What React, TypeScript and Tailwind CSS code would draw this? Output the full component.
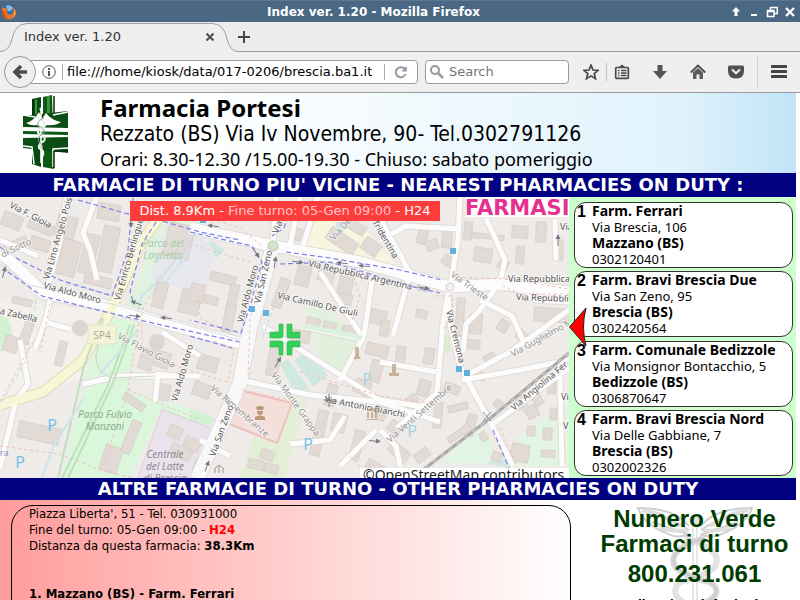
import { useState } from 'react';

const pharmacies = [
  { name: 'Farm. Ferrari', address: 'Via Brescia, 106', city: 'Mazzano (BS)', phone: '0302120401' },
  { name: 'Farm. Bravi Brescia Due', address: 'Via San Zeno, 95', city: 'Brescia (BS)', phone: '0302420564' },
  { name: 'Farm. Comunale Bedizzole', address: 'Via Monsignor Bontacchio, 5', city: 'Bedizzole (BS)', phone: '0306870647' },
  { name: 'Farm. Bravi Brescia Nord', address: 'Via Delle Gabbiane, 7', city: 'Brescia (BS)', phone: '0302002326' },
];

// x, y, width, height, angle
const buildings = [
  [2, 214, 20, 14, 22], [28, 222, 26, 10, 22], [56, 216, 20, 22, 14], [4, 240, 24, 10, -24], [30, 238, 20, 12, 18],
  [60, 240, 18, 36, 14], [82, 234, 14, 40, 14], [98, 204, 22, 16, 10], [100, 226, 16, 46, 12], [84, 276, 28, 10, 14],
  [12, 298, 20, 7, 14], [57, 341, 8, 25, 14], [4, 336, 14, 16, 16], [22, 322, 9, 22, 20], [18, 425, 42, 16, 12],
  [166, 224, 26, 34, 14], [154, 282, 12, 26, 14], [180, 290, 20, 24, 14], [202, 296, 16, 8, 14], [210, 274, 26, 9, 14],
  [228, 284, 9, 30, 12], [190, 284, 14, 18, 14], [224, 304, 10, 28, 12], [140, 348, 14, 22, 18], [156, 352, 14, 16, 18],
  [198, 356, 20, 15, 15], [193, 383, 18, 14, 20], [156, 384, 14, 16, 10], [122, 398, 24, 8, 34], [102, 446, 18, 26, 18],
  [126, 420, 10, 34, 22], [168, 426, 14, 12, 25], [184, 438, 16, 12, 25], [170, 446, 22, 12, 25], [194, 460, 12, 12, 25],
  [292, 228, 10, 12, 24], [326, 234, 32, 14, 34], [362, 240, 18, 14, 36], [346, 222, 20, 10, 30],
  [276, 278, 10, 30, 20], [296, 266, 14, 20, 14], [318, 270, 16, 12, 20], [338, 276, 14, 24, 12], [338, 294, 14, 10, 14],
  [306, 318, 14, 10, 12], [323, 322, 13, 10, 12], [342, 326, 14, 10, 12], [366, 344, 22, 12, 14], [370, 310, 16, 14, 14],
  [268, 344, 12, 32, 10], [288, 330, 22, 12, 10], [370, 360, 12, 22, 14], [354, 380, 16, 14, 24], [326, 384, 10, 22, 14],
  [314, 410, 10, 46, 12], [332, 414, 14, 18, 12], [352, 430, 10, 30, 14], [374, 406, 12, 14, 20], [388, 422, 14, 12, 40],
  [388, 446, 22, 12, 40], [366, 462, 18, 10, 30], [260, 450, 14, 10, 20], [248, 460, 16, 9, 14], [264, 464, 14, 9, 14],
  [418, 224, 10, 20, 14], [442, 228, 10, 20, 4], [464, 222, 8, 18, 4], [472, 234, 32, 5, 6], [474, 248, 18, 14, 8],
  [512, 226, 16, 12, 4], [516, 246, 8, 18, 4], [536, 222, 10, 20, 2], [554, 240, 9, 20, 2], [498, 260, 10, 10, 30],
  [426, 240, 12, 10, -20], [442, 256, 12, 10, 35], [456, 298, 8, 38, 4], [470, 314, 12, 20, 4], [464, 340, 16, 9, 4],
  [416, 310, 11, 8, 14], [380, 320, 9, 16, 8], [396, 346, 9, 20, 8], [424, 348, 10, 16, 10], [418, 282, 10, 9, 10],
  [534, 308, 36, 14, 4], [498, 320, 10, 12, 30], [516, 332, 14, 10, 40], [476, 372, 10, 8, 30], [444, 384, 16, 9, 22],
  [434, 402, 8, 26, 6], [448, 404, 20, 7, -14], [466, 414, 9, 22, 14], [446, 430, 26, 7, -36], [480, 432, 7, 9, -30],
  [515, 395, 10, 14, -30], [532, 390, 9, 16, -30], [526, 406, 12, 12, -30], [548, 378, 8, 16, 4], [550, 408, 7, 12, 4],
  [527, 426, 8, 10, 4], [543, 428, 9, 12, 4], [511, 444, 18, 18, 10], [541, 450, 14, 7, 4], [492, 452, 9, 9, 20],
  [494, 400, 8, 8, 30], [418, 380, 12, 16, 14], [404, 396, 14, 9, -38], [414, 450, 16, 10, -38], [484, 354, 12, 9, -28],
];

const mainRoads = 'M0 253 L13 263 L43 293 L100 304 L200 333 L240 343 M190 228 L273 246 L360 262 L450 287 L500 284 L569 292';
const sanZeno = 'M273 246 L250 329 L240 383 L197 479';
const berlinguer = 'M160 216 L143 240 L110 312 L83 360 L43 392 L0 405';

const roads = [
  'M97 196 L83 233 L90 250 L97 280', 'M67 196 L60 240 L47 290', 'M50 300 L46 318 L35 349',
  'M0 240 L38 256', 'M44 322 L70 329', 'M83 384 L120 376 L200 376', 'M0 468 L16 400 L28 384 L20 340',
  'M276 196 L273 246', 'M300 196 L290 246', 'M318 196 L302 250', 'M380 218 L410 273 L393 336',
  'M460 197 L458 240 L450 288', 'M380 240 L406 226 L460 229', 'M486 218 L505 260 L498 290',
  'M448 293 L443 323 L437 393 L397 428', 'M448 293 L449 320 L460 366 L487 416 L513 466',
  'M380 362 L436 372', 'M320 272 L363 338 L340 380', 'M305 327 L362 339', 'M372 280 L364 336',
  'M263 326 L380 400 L430 408', 'M240 380 L310 395 L380 402 L440 422', 'M465 376 L510 352 L569 310',
  'M462 380 L520 370 L569 360', 'M493 424 L520 404 L569 368', 'M555 220 L556 260', 'M560 376 L562 466',
  'M480 300 L512 316 L525 345', 'M463 352 L466 324 L480 310 L497 286', 'M510 284 L535 300 L569 302',
  'M155 402 L158 374 L175 376', 'M162 332 L200 356', 'M380 430 L396 446 L400 466', 'M200 440 L230 456',
  'M345 416 L330 440 L290 444', 'M340 466 L376 430',
];

const blueRoutes = [
  'M78 200 L132 215 L162 221 L200 232 L240 240', 'M133 198 L128 250 L112 296 L60 280 L16 258',
  'M0 247 L8 253', 'M8 272 L42 296 L110 313 L170 327 L240 342', 'M156 222 L142 244 L130 292 L134 304',
  'M190 232 L252 246 L262 262 L252 300 L241 333 L190 320', 'M286 252 L330 258 L400 270 L442 280',
  'M280 264 L330 262 L410 286 L440 293', 'M290 208 L284 228 L272 236', 'M493 430 L509 468', 'M190 336 L232 348',
];

const redPaths = [
  'M196 234 L160 280 L142 310 L142 360', 'M51 298 L44 335 L40 352', 'M0 402 L20 365 L34 340', 'M139 323 L128 390 L102 470',
  'M128 390 L200 420', 'M0 446 L60 454 L100 470 L140 480', 'M162 362 L228 382 L234 350 L212 340', 'M190 244 L250 262',
  'M198 294 L200 318 L225 330', 'M262 266 L250 320 L248 380', 'M242 390 L290 400', 'M350 266 L360 296 L352 320',
  'M451 277 L505 279 L569 289', 'M436 296 L452 296 L453 312 L443 330', 'M500 428 L516 464', 'M300 372 L380 396 L440 404',
  'M569 294 L520 294 L503 286', 'M160 204 L240 228 L262 246', 'M345 452 L369 474',
];

// text, x, y, angle, light
const streets: [string, number, number, number, boolean?][] = [
  ['Via F. Gioia', 9, 207, 28], ['a di Sotto', -4, 261, -26, true], ['Via Lino Angelo Pois', 49, 280, -74],
  ['Via Aldo Moro', 43, 288, 15], ['Via Zabella', -8, 312, 13], ['Via Enrico Berlinguer', 120, 301, -74],
  ['Via Flavio Gioia', 117, 338, 28, true], ['Via Aldo Moro', 177, 402, -74], ['Via Aldo Moro', 243, 323, -75],
  ['Via San Zeno', 260, 304, -77], ['Via', 278, 234, -70], ['Via De', 334, 241, -48, true], ['Tridentina', 372, 222, 60],
  ['Via Repubblica Argentina', 308, 266, 13], ['Via Camillo De Giuli', 277, 298, 13], ['Via Monte Grappa', 271, 375, 54, true],
  ['Via Rimembranze', 210, 389, 41, true], ['Via San Zeno', 215, 457, -70], ['Via Antonio Bianchi', 324, 402, 11],
  ['Via Venti Settembre', 390, 443, -41, true], ['Via Cremona', 446, 311, 76], ['Via Trieste', 450, 276, 35, true],
  ['Via Repubblica', 508, 282, 0], ['Via Repubbli', 516, 300, 2], ['Via Guglielmo M', 513, 357, -29, true],
  ['Via Angiolina Fer', 514, 411, -40], ['Via', 560, 230, 0], ['Vi', 561, 400, 0], ['V', 563, 429, 0],
];

const arrows = [
  [131, 222, 90], [4, 272, -75], [136, 303, 200], [135, 316, 8], [166, 318, 188], [213, 226, 188], [256, 253, 55],
  [275, 262, -80], [298, 262, 8], [342, 263, 188], [364, 266, 188], [424, 288, 10], [558, 240, -90], [227, 400, 80],
  [278, 362, -60], [207, 466, -70], [375, 441, 5],
];

function StreetMap() {
  return (
    <svg viewBox="0 197 569 281" preserveAspectRatio="xMinYMin slice" className="block h-[281px] w-full bg-[#eeebe8]" fontFamily="'Noto Sans', sans-serif" role="img" aria-label="Mappa">
      <rect x="0" y="197" width="569" height="281" fill="#eeebe8" />
      <path d="M0 300 L110 312 L84 376 L0 410Z" fill="#f4f0eb" />
      <path d="M156 222 L200 205 L205 240 L170 275 L140 310 L125 306 L145 260Z" fill="#e1f2e0" />
      <path d="M112 317 L138 323 L128 392 L200 412 L200 424 L160 412 L130 478 L62 478 L88 370Z" fill="#daf6db" />
      <path d="M0 315 L8 318 L16 345 L0 352Z M190 408 L214 418 L210 426 L190 422Z" fill="#d2f3d2" />
      <path d="M302 300 L320 305 L363 339 L340 380 L320 360Z" fill="#e2f1dd" />
      <path d="M287 399 L307 399 L284 478 L240 478 L257 430Z" fill="#e3efd5" />
      <path d="M480 423 L493 443 L488 463 L440 463Z M517 440 L569 395 L569 466 L517 466Z" fill="#e2f5e4" />
      <path d="M500 285 L569 287 L569 293 L504 292Z M442 336 L450 334 L450 352 L442 354Z" fill="#d6eed2" />
      <path d="M315 221 L352 214 L397 266 L385 272 L305 249Z" fill="#f8f6df" />
      <path d="M488 464 L494 454 L508 460 L508 468Z M202 247 L212 241 L224 250 L217 258Z M335 222 L346 222 L344 232 L336 230Z" fill="#cfe9e1" />
      <path d="M307 349 L328 376 L313 386 L294 361Z M280 364 L288 359 L309 388 L297 398Z" fill="#cfe9e0" />
      <path d="M166 224 L200 234 L214 250 L206 292 L150 280Z" fill="#e7e7ee" />
      <path d="M162 409 L216 430 L196 478 L138 478Z" fill="#ebe3ec" stroke="#ddd0dd" />
      <path d="M243 391 L292 403 L277 443 L229 424Z" fill="#f4dfdb" stroke="#efc0bb" strokeWidth="2" />

      <g fill="none" stroke="#e0dcd9" strokeLinejoin="round">
        <path d={mainRoads} strokeWidth="13" />
        <path d={roads.join(' ')} strokeWidth="7" />
        <path d={sanZeno} strokeWidth="16" />
      </g>
      <g>
        {buildings.map(([x, y, w, h, angle], i) => (
          <rect key={i} x={x} y={y} width={w} height={h} fill="#e2dad5" stroke="#d5ccc7" strokeWidth="0.7" transform={`rotate(${angle} ${x + w / 2} ${y + h / 2})`} />
        ))}
      </g>
      <path d={berlinguer} fill="none" stroke="#deddb6" strokeWidth="11" />
      <g fill="none" stroke="#fdfcfc" strokeLinejoin="round">
        <path d={mainRoads} strokeWidth="11" />
        <path d={roads.join(' ')} strokeWidth="5" />
        <path d={sanZeno} strokeWidth="14" stroke="#f9f8f9" />
      </g>
      <path d={berlinguer} fill="none" stroke="#f8f6d6" strokeWidth="9" />
      <path d="M305 326 L362 338" stroke="#dcf2de" strokeWidth="5" />
      <path d="M102 318 L84 366 L58 478 M134 325 L112 385 L68 478 M130 325 L108 385 L62 478" fill="none" stroke="#bfe0bd" strokeWidth="2" />
      <path d="M104 318 L96 356 Q96 374 112 378 L155 376" fill="none" stroke="#c8d8c4" />
      <path d="M0 265 L30 285 L120 306 L240 340" fill="none" stroke="#dcdcdc" />
      <circle cx="80" cy="328" r="8" fill="#ddd5d0" />
      <circle cx="157" cy="342" r="8" fill="#ddd5d0" />
      <circle cx="273" cy="246" r="5" fill="#d3e3c8" stroke="#b6c6aa" />
      <circle cx="450" cy="287" r="4" fill="#f4f2f1" stroke="#d0cccc" />
      <path d="M196 232 L166 272 L142 296 L138 310 M100 374 L138 330 M42 478 L54 445 L84 398 M166 282 L190 250" fill="none" stroke="#cfe5ec" strokeWidth="2" />
      <path d="M36 300 L26 360 L0 405 M66 284 L110 294 M276 300 L262 340" fill="none" stroke="#b3dfe8" strokeDasharray="4 3" />

      <path d="M569 353 L493 416 L423 470" fill="none" stroke="#a8a8a8" strokeWidth="3" />
      <path d="M569 353 L493 416 L423 470" fill="none" stroke="#dedede" strokeWidth="1" strokeDasharray="5 5" />
      <path d="M483 412 L491 421 M491 412 L483 421" stroke="#8a8a8a" />
      <path d={redPaths.join(' ')} fill="none" stroke="#f6bdb4" strokeDasharray="3 3" />
      <path d={blueRoutes.join(' ')} fill="none" stroke="#7c80ec" strokeDasharray="5 3" strokeWidth="1.2" />
      <g fill="none" stroke="#7a7a80">
        {arrows.map(([x, y, angle], i) => (
          <g key={i} transform={`translate(${x} ${y}) rotate(${angle})`}>
            <path d="M-6 0 H2" />
            <path d="M1 -2.5 L6 0 L1 2.5Z" fill="#77777f" stroke="none" />
          </g>
        ))}
      </g>

      <rect x="88" y="325" width="28" height="19" rx="2" fill="#f3f4d8" stroke="#e2e3c2" />
      <text x="102" y="339" fontSize="10" textAnchor="middle" fill="#aaaaa0">SP4</text>
      <g fontSize="9">
        {streets.map(([label, x, y, angle, light], i) => (
          <text key={i} transform={`translate(${x} ${y}) rotate(${angle})`} fill={light ? '#949090' : '#575555'} stroke="#ffffff" strokeWidth="2" strokeOpacity="0.6" paintOrder="stroke">
            {label}
          </text>
        ))}
      </g>
      <g fontSize="10" fontStyle="italic" textAnchor="middle" fill="#86b08a">
        <text x="163" y="247" fill="#a5ccaa">Parco del</text>
        <text x="163" y="259" fill="#a5ccaa">Laghetto</text>
        <text x="105" y="418">Parco Fulvio</text>
        <text x="105" y="430">Manzoni</text>
        <g fill="#8f8a98">
          <text x="165" y="458">Centrale</text>
          <text x="165" y="470">del Latte</text>
          <text x="165" y="482">di Brescia</text>
        </g>
      </g>
      <g fontSize="16" fill="#74bfe6" textAnchor="middle">
        <text x="52" y="431">P</text>
        <text x="20" y="468">P</text>
        <text x="308" y="450">P</text>
        <text x="367" y="385" fill="#a9d4ea">P</text>
        <text x="412" y="437" fill="#a9d4ea">P</text>
      </g>
      <text x="0" y="456" fontSize="9" fill="#8d8fc8">ra</text>

      <path d="M249 306h6v6h-6z M263 310h6v6h-6z M450 248h6v6h-6z M456 366h6v6h-6z M464 370h6v6h-6z M200 220h6v3h-6z" fill="#62b1dd" />
      <g fill="#b89a76">
        <path d="M256 407 Q260 405 264 407 L263 410 H257Z M257 411 H263 Q263 415 260 415 Q257 415 257 411Z M255 420 V417 Q260 414 265 417 V420Z" />
        <path d="M355 348 L357 346 L359 348 L359 356 L361 359 L353 359 L355 356Z M392 364h4v9h3v3h-10v-3h3z" opacity="0.7" />
        <path d="M366 411 L372 407 L378 411Z M367 412h2v6h-2z M371 412h2v6h-2z M375 412h2v6h-2z M366 419h12v1h-12z" opacity="0.7" />
      </g>
      <path d="M324 400h12 M329 394v13 M325 396l8 8" stroke="#777" fill="none" />
      <path d="M214 469l5-4 5 4 M215 469v4 M223 469v4 M219 466v7" stroke="#999" fill="none" />

      <g fill="#35d058" stroke="#2db84c" strokeWidth="0.6">
        <path d="M279 324h4v12q0 2-2 2h-11v-6h9z" />
        <path d="M287 324h5v8h8v6h-11q-2 0-2-2z" />
        <path d="M270 341h11q2 0 2 2v12h-4v-8h-9z" />
        <path d="M289 341h11v6h-8v8h-5v-12q0-2 2-2z" />
      </g>

      <rect x="466" y="197" width="103" height="20" fill="#fff" />
      <text x="465" y="215" fontSize="21" fontWeight="700" fill="#e6318f" fontFamily="'DejaVu Sans', sans-serif">FARMASI</text>
      <rect x="360" y="468" width="209" height="10" fill="#fff" />
      <text x="363" y="480" fontSize="14" fill="#222">©OpenStreetMap contributors</text>
    </svg>
  );
}

function PharmacyCross() {
  return (
    <svg viewBox="0 0 46 74" className="h-[74px] w-[46px] shrink-0" aria-hidden="true">
      <path d="M9 4 L18 2 L18 72 L9 69Z" fill="#0a4a12" />
      <path d="M20 2 L29 0 L31 74 L20 72Z" fill="#0d5a16" />
      <path d="M24 1 L27 1 L27 20 L24 20Z M12 5 L14 4 L14 22 L12 22Z" fill="#3c9442" />
      <path d="M0 21 L45 16 L45 58 L0 53Z" fill="#0b4f14" />
      <path d="M0 32 L45 33 L45 42 L0 43Z" fill="#fff" />
      <path d="M0 36 L45 37 L45 40 L0 39Z" fill="#0d5a16" />
      <path d="M0 20 L12 22 M30 20 L45 17 M0 51 L9 52 L11 69 M45 53 L30 54 L30 72" fill="none" stroke="#fff" strokeWidth="1.5" />
      <path d="M31 56 H45 M10 4 V20 M31 1 V18 M31 56 V73" stroke="#062c0a" strokeWidth="1.5" />
      <path d="M3 28 Q11 26 16 17 L19 24 L23 18 Q28 25 38 27 Q32 31 24 30 L19 34 L14 30 Q8 31 3 28Z" fill="#fff" />
      <path d="M18 13 V68" stroke="#fff" strokeWidth="1.6" />
      <path d="M15 23 Q24 27 21 32 Q14 34 15 38 Q24 42 21 46 Q15 49 16 53 Q22 56 20 61" fill="none" stroke="#e8f2e8" strokeWidth="2" />
      <path d="M21 23 Q12 27 16 31 Q23 34 21 38 Q13 42 16 47 Q21 50 19 54" fill="none" stroke="#8aa78c" strokeWidth="1" />
      <circle cx="18" cy="14" r="1.6" fill="#fff" />
    </svg>
  );
}

function Caduceus() {
  return (
    <svg viewBox="0 0 130 110" className="absolute top-[6px] left-1/2 h-[110px] w-[130px] -translate-x-1/2" fill="none" stroke="#cfcfcf" aria-hidden="true">
      <path d="M59 20 Q45 2 8 2 Q14 18 34 26 Q48 34 60 28 M59 24 Q42 12 16 7 M57 28 Q40 22 22 16 M71 20 Q85 2 122 2 Q116 18 96 26 Q82 34 70 28 M71 24 Q88 12 114 7 M73 28 Q90 22 108 16" strokeWidth="2" />
      <path d="M12 4 Q34 8 50 20 M118 4 Q96 8 80 20 M30 22 Q46 26 58 24 M100 22 Q84 26 72 24" stroke="#dedede" strokeWidth="4" />
      <path d="M63 18 V110 M67 18 V110" />
      <circle cx="65" cy="14" r="5" fill="#e6e6e6" />
      <path d="M55 32 Q96 44 84 62 Q70 72 50 76 Q38 88 56 98" strokeWidth="6" stroke="#e2e2e2" />
      <path d="M75 32 Q34 44 46 62 Q60 72 80 76 Q96 88 72 98" strokeWidth="6" stroke="#d8d8d8" />
      <path d="M75 32 Q34 44 46 62 Q60 72 80 76 Q96 88 72 98" stroke="#bdbdbd" />
    </svg>
  );
}

function TitleBar() {
  return (
    <div className="flex h-[22px] shrink-0 items-center border-t border-[#5c7690] bg-[#4a6784] pr-1 pl-px text-white">
      <svg viewBox="0 0 16 16" className="h-4 w-4 shrink-0" aria-hidden="true">
        <circle cx="8" cy="8" r="7" fill="#2f6fb5" />
        <path d="M5 2 Q9 0 12 4 Q10 8 7 7Z" fill="#7cc4ea" />
        <path d="M1 3 Q2 4 4 4 Q6 4 7 6 Q5 7 6 9 Q9 12 12 9 Q13 6 11 3 Q16 6 15 10 Q13 15 8 15.500 Q2 15 1 9Z" fill="#e8702a" />
        <path d="M13 5 Q16 10 12 13.500 Q14 10 13 5Z" fill="#fbc83a" />
        <path d="M1 7 Q1 13 7 15 Q3 12 3 8Z" fill="#c8421c" />
      </svg>
      <h1 className="flex-1 text-center text-[12px] font-bold">Index ver. 1.20 - Mozilla Firefox</h1>
      <div className="flex gap-[6px]">
        <button aria-label="Shade" className="h-3 w-3">
          <svg viewBox="0 0 12 12"><path d="M6 1 L10 5.500 H7.500 V10 H4.500 V5.500 H2Z" fill="#fff" /></svg>
        </button>
        <button aria-label="Minimize" className="h-3 w-3">
          <svg viewBox="0 0 12 12"><path d="M3 8 H9 V10 H3Z" fill="#fff" /></svg>
        </button>
        <button aria-label="Restore" className="h-3 w-3">
          <svg viewBox="0 0 12 12" fill="none" stroke="#fff" strokeWidth="1.500"><path d="M1.500 4.500 H8 V10.500 H1.500Z M1 5.500 H8 M4.500 4 V1.500 H11.300 V7.500 H8.500" /></svg>
        </button>
        <button aria-label="Close" className="h-3 w-3">
          <svg viewBox="0 0 12 12"><path d="M2 2 L10 10 M10 2 L2 10" stroke="#fff" strokeWidth="2.300" /></svg>
        </button>
      </div>
    </div>
  );
}

function TabStrip() {
  return (
    <div className="flex h-[30px] shrink-0 bg-[#ececec]">
      <div className="relative flex w-[238px] items-center justify-between pr-[22px] pl-6">
        <svg viewBox="0 0 238 30" className="absolute inset-0 h-[30px] w-[238px]" aria-hidden="true">
          <path d="M0 29.500 Q9 29.500 12 17 Q15 1.500 27 1.500 H212 Q224 1.500 227 17 Q230 29.500 238 29.500" fill="#efefef" stroke="#9aa0a6" />
        </svg>
        <span className="relative text-[13px] text-[#333]">Index ver. 1.20</span>
        <button aria-label="Close tab" className="relative h-3 w-3">
          <svg viewBox="0 0 12 12"><path d="M2.500 2.500 L9.500 9.500 M9.500 2.500 L2.500 9.500" stroke="#4c5454" strokeWidth="2.200" /></svg>
        </button>
      </div>
      <div className="flex flex-1 items-center border-b border-[#9a9a9a]">
        <button aria-label="New tab" className="h-3 w-3">
          <svg viewBox="0 0 12 12"><path d="M6 0 V12 M0 6 H12" stroke="#444" strokeWidth="2" /></svg>
        </button>
      </div>
    </div>
  );
}

function Toolbar() {
  const [url, setUrl] = useState('file:///home/kiosk/data/017-0206/brescia.ba1.it');
  const [query, setQuery] = useState('');

  return (
    <div className="flex h-[41px] shrink-0 items-center border-b border-[#9a9a9a] bg-[#efefef] pr-[13px] pl-1">
      <button aria-label="Back" className="z-10 flex h-8 w-8 shrink-0 items-center justify-center rounded-full border border-[#9a9a9a] bg-[#efefef]">
        <svg viewBox="0 0 16 16" className="h-4 w-4"><path d="M9 2 L3 8 L9 14 M3 8 H15" fill="none" stroke="#4a4a4a" strokeWidth="3.500" /></svg>
      </button>
      <div className="-ml-2 flex h-6 flex-1 items-center rounded-sm border border-[#9a9a9a] bg-white pl-[13px]">
        <svg viewBox="0 0 14 14" className="h-[14px] w-[14px] shrink-0" aria-hidden="true">
          <circle cx="7" cy="7" r="6.300" fill="none" stroke="#555" />
          <path d="M6 3h2v2H6z M6 6h2v5H6z" fill="#555" />
        </svg>
        <input aria-label="Address" value={url} onChange={(e) => setUrl(e.target.value)} className="ml-[6px] h-4 min-w-0 flex-1 border-l border-[#aaa] pl-1 text-[13px] text-black outline-none" />
        <span className="ml-3 h-4 w-px bg-[#aaa]" />
        <button aria-label="Reload" className="flex w-8 justify-center">
          <svg viewBox="0 0 14 14" className="h-[14px] w-[14px]"><path d="M11.500 9 A5 5 0 1 1 11 4.500" fill="none" stroke="#8e9aa6" strokeWidth="2" /><path d="M12.800 1 V6.500 H7.500Z" fill="#8e9aa6" /></svg>
        </button>
      </div>
      <label className="ml-[7px] flex h-6 w-[144px] items-center gap-[5px] rounded-sm border border-[#9a9a9a] bg-white pl-1">
        <svg viewBox="0 0 14 14" className="h-[14px] w-[14px] shrink-0" aria-hidden="true"><circle cx="5" cy="5" r="4" fill="none" stroke="#999" strokeWidth="2" /><path d="M8 8 L13 13" stroke="#999" strokeWidth="2.500" /></svg>
        <input aria-label="Search" placeholder="Search" value={query} onChange={(e) => setQuery(e.target.value)} className="w-full min-w-0 text-[13px] outline-none placeholder:text-[#757575]" />
      </label>
      <button aria-label="Bookmark" className="ml-[14px] h-4 w-4">
        <svg viewBox="0 0 16 16"><path d="M8 1.200 L10 6 L15.200 6.300 L11.200 9.600 L12.500 14.700 L8 11.900 L3.500 14.700 L4.800 9.600 L0.800 6.300 L6 6Z" fill="none" stroke="#4a4a4a" strokeWidth="1.700" /></svg>
      </button>
      <span className="mx-[7px] h-[18px] w-px bg-[#c4c4c4]" />
      <button aria-label="Bookmarks list" className="h-4 w-4">
        <svg viewBox="0 0 16 16"><path d="M2.500 3.500 H13.500 Q14.300 3.500 14.300 4.300 V13.500 Q14.300 14.300 13.500 14.300 H2.500 Q1.700 14.300 1.700 13.500 V4.300 Q1.700 3.500 2.500 3.500Z" fill="none" stroke="#4a4a4a" strokeWidth="1.700" /><path d="M5 3 L8 0.500 L11 3Z" fill="#4a4a4a" /><path d="M4 6.500 H5.500 M7 6.500 H12.500 M4 9 H5.500 M7 9 H12.500 M4 11.500 H5.500 M7 11.500 H12.500" stroke="#4a4a4a" strokeWidth="1.400" /></svg>
      </button>
      <button aria-label="Downloads" className="ml-[22px] h-4 w-4">
        <svg viewBox="0 0 16 16"><path d="M5.500 1 H10.500 V7 H15 L8 15 L1 7 H5.500Z" fill="#555" /></svg>
      </button>
      <button aria-label="Home" className="ml-[22px] h-4 w-4">
        <svg viewBox="0 0 16 16"><path d="M0.800 8.500 L8 1.500 L15.200 8.500" fill="none" stroke="#4a4a4a" strokeWidth="1.800" /><path d="M3 8.500 L8 4 L13 8.500 V15 H9.500 V10.500 H6.500 V15 H3Z" fill="#5c5c5c" /></svg>
      </button>
      <button aria-label="Pocket" className="ml-[22px] h-4 w-4">
        <svg viewBox="0 0 16 16"><path d="M1.500 1.500 H14.500 Q16 1.500 16 3 V7 Q16 14.500 8 14.500 Q0 14.500 0 7 V3 Q0 1.500 1.500 1.500Z" fill="#4f4f4f" /><path d="M4 5.500 L8 9.300 L12 5.500" fill="none" stroke="#efefef" strokeWidth="2" /></svg>
      </button>
      <span className="mx-[13px] h-[34px] w-px bg-[#d2d2d2]" />
      <button aria-label="Menu" className="h-4 w-4">
        <svg viewBox="0 0 16 16"><path d="M1 2.500 H15 M1 7.500 H15 M1 12.500 H15" stroke="#444" strokeWidth="3" strokeLinecap="round" /></svg>
      </button>
    </div>
  );
}

export default function App() {
  return (
    <div className="flex h-screen flex-col overflow-hidden bg-white font-['DejaVu_Sans',sans-serif]">
      <TitleBar />
      <TabStrip />
      <Toolbar />
      <main className="mr-1 font-['Noto_Sans',sans-serif] text-black">
        <header className="flex h-20 items-start gap-[31px] bg-linear-to-r from-white from-25% via-[#e0f3fc] via-85% to-[#c0e4f7] pt-[2px] pl-[23px]">
          <PharmacyCross />
          <div className="whitespace-nowrap">
            <h2 className="text-[24px] leading-[26px] font-bold">Farmacia Portesi</h2>
            <p className="font-['DejaVu_Sans_Condensed',sans-serif] text-[21px] leading-[26px]">Rezzato (BS) Via Iv Novembre, 90- Tel.0302791126</p>
            <p className="text-[18px] leading-[24px]">Orari: 8.30-12.30 /15.00-19.30 - Chiuso: sabato pomeriggio</p>
          </div>
        </header>
        <h2 className="bg-[#000080] text-center font-['DejaVu_Sans',sans-serif] text-[18px] leading-[24px] font-bold whitespace-nowrap text-white">
          FARMACIE DI TURNO PIU' VICINE - NEAREST PHARMACIES ON DUTY :
        </h2>
        <section className="flex">
          <div className="relative min-w-0 flex-1">
            <StreetMap />
            <p className="absolute top-1 left-[130px] w-[310px] bg-[#ff3c3c] text-center font-['DejaVu_Sans',sans-serif] text-[13px] leading-[20px] whitespace-nowrap text-[#ffc4c4]">
              <span className="text-white">Dist. 8.9Km -</span> Fine turno: 05-Gen 09:00 <span className="text-white">- H24</span>
            </p>
          </div>
          <div className="relative flex w-[227px] flex-col justify-between bg-[#ccffcc] pt-[5px] pr-[3px] pb-[2px] pl-[5px]">
            {pharmacies.map((p, i) => (
              <article key={p.name} className="flex rounded-xl border border-[#333] bg-white pl-[2px] whitespace-nowrap">
                <span className="w-[15px] pt-px font-['Liberation_Sans',sans-serif] text-[16px] leading-[16px] font-bold">{i + 1}</span>
                <div className="text-[13px] leading-[16px]">
                  <h3 className="text-[14px] leading-[16px] font-bold">{p.name}</h3>
                  <p>{p.address}</p>
                  <p className="text-[14px] leading-[16px] font-bold">{p.city}</p>
                  <p>{p.phone}</p>
                </div>
              </article>
            ))}
            <svg viewBox="0 0 18 40" className="absolute top-[110px] left-0 h-10 w-[18px]" aria-hidden="true">
              <path d="M0.500 20 L17 1 Q12 20 17 39Z" fill="#f00" stroke="#222" />
            </svg>
          </div>
        </section>
        <h2 className="bg-[#000080] text-center font-['DejaVu_Sans',sans-serif] text-[18px] leading-[22px] font-bold whitespace-nowrap text-white">
          ALTRE FARMACIE DI TURNO - OTHER PHARMACIES ON DUTY
        </h2>
        <section className="flex">
          <div className="flex-1 bg-linear-to-r from-[#ff9c9c] to-white pt-[5px] pl-[11px]">
            <div className="h-40 rounded-[22px] border border-black pl-[17px] font-['DejaVu_Sans_Condensed',sans-serif] text-[13px] leading-[16px]">
              <p>Piazza Liberta', 51 - Tel. 030931000</p>
              <p>Fine del turno: 05-Gen 09:00 - <b className="text-[#f00]">H24</b></p>
              <p>Distanza da questa farmacia: <b>38.3Km</b></p>
              <h3 className="mt-8 font-bold">1. Mazzano (BS) - Farm. Ferrari</h3>
            </div>
          </div>
          <aside className="relative w-[225px] pl-[22px] text-center font-['Liberation_Sans',sans-serif] font-bold whitespace-nowrap">
            <div className="relative">
              <Caduceus />
              <p className="relative pt-[6px] text-[24px] leading-[25px] text-[#003c00]">Numero Verde</p>
              <p className="relative text-[24px] leading-[25px] text-[#003c00]">Farmaci di turno</p>
              <p className="relative pt-[5px] text-[24px] leading-[25px] text-[#003c00]">800.231.061</p>
              <p className="relative pt-[10px] pr-6 text-[14px] leading-[18px]">Dettagli sede Telefonia dat</p>
            </div>
          </aside>
        </section>
      </main>
    </div>
  );
}
